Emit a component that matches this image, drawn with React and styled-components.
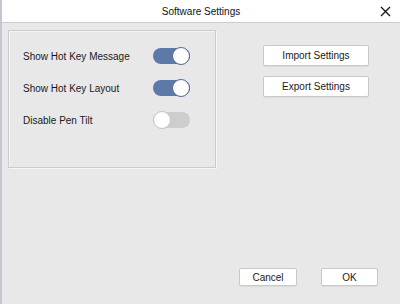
import React, { useState } from "react";
import styled, { createGlobalStyle } from "styled-components";

const Global = createGlobalStyle`
  html, body { margin: 0; padding: 0; background: #e8e8e8; }
  body { font-family: "Liberation Sans", Arial, sans-serif; }
  * { box-sizing: border-box; }
`;

const Window = styled.div`
  width: 400px;
  height: 304px;
  display: flex;
  flex-direction: column;
  background: #e8e8e8;
  border-left: 2px solid #c3c9d2;
  font-family: "Liberation Sans", Arial, sans-serif;
  font-size: 10px;
  color: #1a1a1a;
`;

const TitleBar = styled.div`
  height: 23px;
  flex: none;
  background: #ffffff;
  border-bottom: 1px solid #c8ccd3;
  display: flex;
  align-items: center;
  justify-content: center;
  position: relative;
  font-size: 10px;
  color: #111;
`;

const CloseButton = styled.button`
  position: absolute;
  right: 9px;
  top: 5px;
  width: 12px;
  height: 12px;
  padding: 0;
  border: none;
  background: transparent;
  display: flex;
  align-items: center;
  justify-content: center;
`;

const Body = styled.div`
  flex: 1;
  display: flex;
  flex-direction: column;
  padding: 7px 22px 18px 6px;
`;

const Main = styled.div`
  flex: 1;
  display: grid;
  grid-template-columns: 208px 106px;
  column-gap: 47px;
  align-items: start;
`;

const Panel = styled.div`
  height: 138px;
  border: 1px solid #cbcbcb;
  box-shadow: inset 1px 1px 0 #f4f4f4, 1px 1px 0 #f6f6f6;
  padding: 9px 0 0 14px;
  display: flex;
  flex-direction: column;
`;

const Row = styled.div`
  height: 32px;
  display: grid;
  grid-template-columns: 130px 37px;
  align-items: center;
`;

const Label = styled.span`
  font-size: 10px;
  color: #1a1a1a;
`;

const Track = styled.button`
  position: relative;
  width: 37px;
  height: 16px;
  padding: 0;
  border: none;
  border-radius: 8px;
  background: ${(p) => (p.$on ? "#5c79a8" : "#cdcdcd")};
  cursor: pointer;
`;

const Knob = styled.span`
  position: absolute;
  top: -1px;
  left: ${(p) => (p.$on ? "19px" : "0px")};
  width: 18px;
  height: 18px;
  border-radius: 50%;
  background: #ffffff;
  border: 1px solid ${(p) => (p.$on ? "#4d6a9b" : "#c2c2c2")};
`;

const Side = styled.div`
  padding-top: 15px;
  display: flex;
  flex-direction: column;
  gap: 10px;
`;

const Button = styled.button`
  width: ${(p) => p.$w || 106}px;
  height: ${(p) => p.$h || 21}px;
  background: #ffffff;
  border: 1px solid #c9c9c9;
  border-radius: 2px;
  box-shadow: 0 1px 1px rgba(0, 0, 0, 0.06);
  font-family: "Liberation Sans", Arial, sans-serif;
  font-size: 10px;
  color: #1a1a1a;
  padding: 0;
`;

const Footer = styled.div`
  display: flex;
  justify-content: flex-end;
  gap: 24px;
`;

function Toggle({ initial }) {
  const [on, setOn] = useState(initial);
  return (
    <Track $on={on} onClick={() => setOn(!on)}>
      <Knob $on={on} />
    </Track>
  );
}

export default function App() {
  return (
    <>
      <Global />
      <Window>
        <TitleBar>
          Software Settings
          <CloseButton aria-label="close">
            <svg width="11" height="11" viewBox="0 0 11 11">
              <path d="M1 1 L10 10 M10 1 L1 10" stroke="#1a1a1a" strokeWidth="1.4" />
            </svg>
          </CloseButton>
        </TitleBar>
        <Body>
          <Main>
            <Panel>
              <Row>
                <Label>Show Hot Key Message</Label>
                <Toggle initial={true} />
              </Row>
              <Row>
                <Label>Show Hot Key Layout</Label>
                <Toggle initial={true} />
              </Row>
              <Row>
                <Label>Disable Pen Tilt</Label>
                <Toggle initial={false} />
              </Row>
            </Panel>
            <Side>
              <Button>Import Settings</Button>
              <Button>Export Settings</Button>
            </Side>
          </Main>
          <Footer>
            <Button $w={58} $h={18}>Cancel</Button>
            <Button $w={57} $h={18}>OK</Button>
          </Footer>
        </Body>
      </Window>
    </>
  );
}
